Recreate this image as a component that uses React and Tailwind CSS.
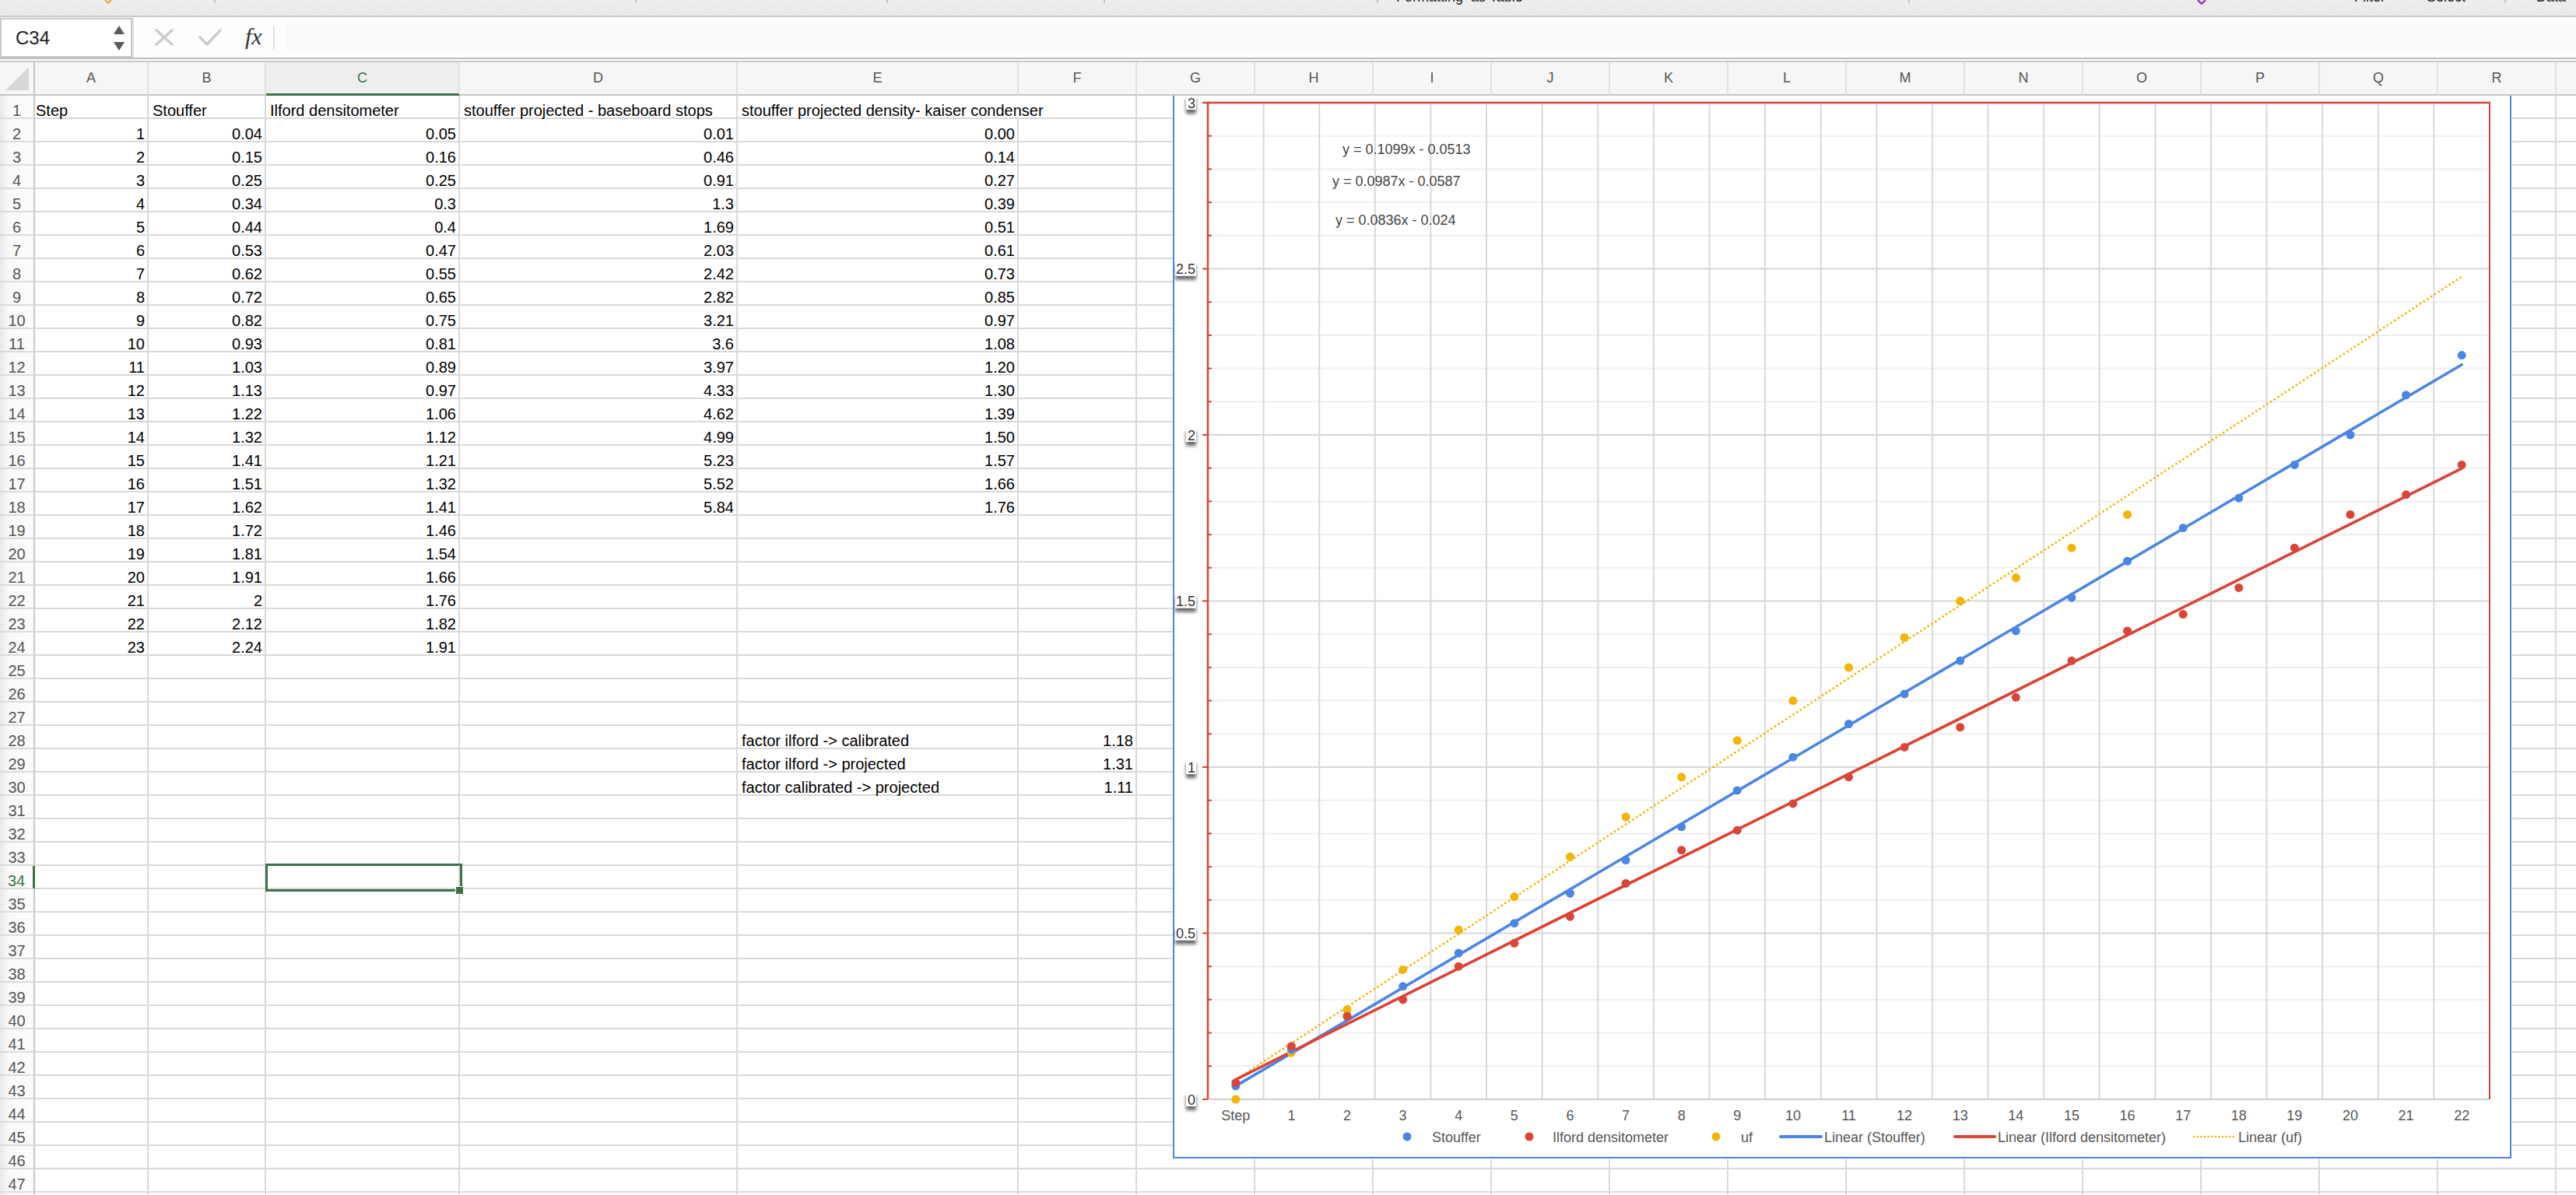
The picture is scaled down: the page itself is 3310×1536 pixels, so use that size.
import React from 'react';

const FONT = '"Liberation Sans", Arial, Helvetica, sans-serif';

const COLS = [
  ['A', 'w-[146px]'], ['B', 'w-[151px]'], ['C', 'w-[249px]'], ['D', 'w-[357px]'], ['E', 'w-[361px]'], ['F', 'w-[152px]'],
  ['G', 'w-[152px]'], ['H', 'w-[152px]'], ['I', 'w-[152px]'], ['J', 'w-[152px]'], ['K', 'w-[152px]'], ['L', 'w-[152px]'],
  ['M', 'w-[152px]'], ['N', 'w-[152px]'], ['O', 'w-[152px]'], ['P', 'w-[152px]'], ['Q', 'w-[152px]'], ['R', 'w-[152px]'], ['S', 'w-[152px]'],
];

const STOUFFER = ['0.04','0.15','0.25','0.34','0.44','0.53','0.62','0.72','0.82','0.93','1.03','1.13','1.22','1.32','1.41','1.51','1.62','1.72','1.81','1.91','2','2.12','2.24'];
const ILFORD = ['0.05','0.16','0.25','0.3','0.4','0.47','0.55','0.65','0.75','0.81','0.89','0.97','1.06','1.12','1.21','1.32','1.41','1.46','1.54','1.66','1.76','1.82','1.91'];
const PROJ = ['0.01','0.46','0.91','1.3','1.69','2.03','2.42','2.82','3.21','3.6','3.97','4.33','4.62','4.99','5.23','5.52','5.84'];
const UF = ['0.00','0.14','0.27','0.39','0.51','0.61','0.73','0.85','0.97','1.08','1.20','1.30','1.39','1.50','1.57','1.66','1.76'];

function cellValue(r, col) {
  if (r === 1) {
    const h = { A: 'Step', B: 'Stouffer', C: 'Ilford densitometer', D: 'stouffer projected - baseboard stops', E: 'stouffer projected density- kaiser condenser' };
    return h[col] ? { t: h[col], num: false } : null;
  }
  if (r >= 2 && r <= 24) {
    const i = r - 2;
    if (col === 'A') return { t: String(r - 1), num: true };
    if (col === 'B') return { t: STOUFFER[i], num: true };
    if (col === 'C') return { t: ILFORD[i], num: true };
    if (col === 'D' && PROJ[i]) return { t: PROJ[i], num: true };
    if (col === 'E' && UF[i]) return { t: UF[i], num: true };
  }
  const f = {
    28: ['factor ilford -> calibrated', '1.18'],
    29: ['factor ilford -> projected', '1.31'],
    30: ['factor calibrated -> projected', '1.11'],
  };
  if (f[r]) {
    if (col === 'E') return { t: f[r][0], num: false };
    if (col === 'F') return { t: f[r][1], num: true };
  }
  return null;
}

function Cell({ r, col, w }) {
  const v = cellValue(r, col);
  const noRight = r === 1 && col === 'E';
  const pad = col === 'A' ? 'pl-[1px]' : 'pl-[5px]';
  return (
    <div
      className={`${w} shrink-0 h-full flex items-end whitespace-nowrap text-[20px] leading-[18px] text-black border-b-2 border-[#d9d9d9] ${noRight ? 'border-r-0' : 'border-r-2'} ${v && v.num ? 'justify-end pr-[3px]' : pad}`}
    >
      {v ? v.t : ''}
    </div>
  );
}

function Row({ r }) {
  const sel = r === 34;
  return (
    <div className="flex h-[30px]">
      <div
        className={`w-[45px] shrink-0 h-full flex items-end justify-center text-[20px] leading-[18px] border-b-2 border-b-[#dcdcdc] bg-[linear-gradient(to_right,#e8e8e8,#f9f9f9_25%,#fcfcfc)] ${sel ? 'text-[#3c7149] border-r-[3px] border-r-[#3c7149]' : 'text-[#555] border-r-2 border-r-[#c8c8c8]'}`}
      >
        {r}
      </div>
      {COLS.map(([c, w]) => (
        <Cell key={c} r={r} col={c} w={w} />
      ))}
    </div>
  );
}

function Chart() {
  const L = 1552, R = 3199, T = 132, B = 1413;
  const CW = (R - L) / 23;
  const cx = (i) => L + CW * (i + 0.5);
  const yv = (v) => B - (v * (B - T)) / 3;
  const BLUE = '#4a86e8', RED = '#db4437', YEL = '#f4b400';
  const txt = { fontFamily: FONT, fontSize: 18 };

  const hGrid = [];
  for (let k = 1; k < 30; k++) {
    hGrid.push(<line key={'h' + k} x1={L} x2={R} y1={yv(k / 10)} y2={yv(k / 10)} stroke={k % 5 === 0 ? '#d6d6d6' : '#efefef'} strokeWidth="2" />);
  }
  const vGrid = [];
  for (let k = 1; k < 23; k++) {
    vGrid.push(<line key={'v' + k} x1={L + CW * k} x2={L + CW * k} y1={T} y2={B} stroke="#d9d9d9" strokeWidth="2" />);
  }
  const ticks = [];
  for (let k = 0; k <= 30; k++) {
    const y = yv(k / 10);
    if (k % 5 === 0) ticks.push(<line key={'t' + k} x1={1545} x2={L} y1={y} y2={y} stroke={RED} strokeWidth="2" />);
    else ticks.push(<line key={'t' + k} x1={L} x2={L + 5} y1={y} y2={y} stroke={RED} strokeWidth="2" />);
  }
  const yLabels = ['0', '0.5', '1', '1.5', '2', '2.5', '3'];
  const xLabels = ['Step'];
  for (let i = 1; i <= 22; i++) xLabels.push(String(i));

  const trend = (m, b) => `M${cx(0)} ${yv(m * 1 + b)} L${cx(22)} ${yv(m * 23 + b)}`;

  return (
    <svg className="absolute left-[1507px] top-0" width="1721" height="1367" viewBox="1507 123 1721 1367">
      <defs>
        <filter id="lblsh" x="-60%" y="-60%" width="220%" height="260%">
          <feDropShadow dx="0" dy="5" stdDeviation="2.2" floodColor="#000" floodOpacity="0.6" />
        </filter>
      </defs>
      <rect x="1507" y="100" width="1721" height="1390" fill="#ffffff" />

      {hGrid}
      {vGrid}
      <line x1={L} x2={R} y1={B} y2={B} stroke="#cfcfcf" strokeWidth="2" />

      <line x1="1546" x2={R + 1} y1={T} y2={T} stroke={RED} strokeWidth="2.5" />
      <line x1={L} x2={L} y1={T} y2={B} stroke={RED} strokeWidth="2.5" />
      <line x1={R} x2={R} y1={T} y2={B} stroke={RED} strokeWidth="2" />
      {ticks}

      {yLabels.map((t, i) => {
        const y = yv(i * 0.5);
        const w = t.length === 1 ? 13 : 27;
        return (
          <g key={'yl' + t}>
            <rect x={1537 - w} y={y - 10} width={w} height="19" fill="#fff" filter="url(#lblsh)" />
            <text x={1536} y={y + 6.5} textAnchor="end" style={txt} fill="#333">{t}</text>
          </g>
        );
      })}

      <path d="M1508 100 V1488 H3226 V100" fill="none" stroke={BLUE} strokeWidth="2" />

      {xLabels.map((t, i) => (
        <text key={'xl' + i} x={cx(i)} y={1439.5} textAnchor="middle" style={txt} fill="#555">{t}</text>
      ))}

      <text x="1725" y="198" style={txt} fill="#454545">y = 0.1099x - 0.0513</text>
      <text x="1712" y="239" style={txt} fill="#454545">y = 0.0987x - 0.0587</text>
      <text x="1716" y="289" style={txt} fill="#454545">y = 0.0836x - 0.024</text>

      <path d={trend(0.1099, -0.0513)} stroke={YEL} strokeWidth="2.8" strokeDasharray="0.1 5.5" strokeLinecap="round" fill="none" />
      <path d={trend(0.0987, -0.0587)} stroke={BLUE} strokeWidth="3.6" strokeLinecap="round" fill="none" />
      <path d={trend(0.0836, -0.024)} stroke={RED} strokeWidth="3.6" strokeLinecap="round" fill="none" />

      {UF.map((v, i) => <circle key={'u' + i} cx={cx(i)} cy={yv(parseFloat(v))} r="5.5" fill={YEL} />)}
      {STOUFFER.map((v, i) => <circle key={'s' + i} cx={cx(i)} cy={yv(parseFloat(v))} r="5.5" fill={BLUE} />)}
      {ILFORD.map((v, i) => <circle key={'i' + i} cx={cx(i)} cy={yv(parseFloat(v))} r="5.5" fill={RED} />)}

      <circle cx="1808" cy="1461" r="5.5" fill={BLUE} />
      <text x="1840" y="1467.5" style={txt} fill="#555">Stouffer</text>
      <circle cx="1965" cy="1461" r="5.5" fill={RED} />
      <text x="1995" y="1467.5" style={txt} fill="#555">Ilford densitometer</text>
      <circle cx="2205" cy="1461" r="5.5" fill={YEL} />
      <text x="2237" y="1467.5" style={txt} fill="#555">uf</text>
      <line x1="2288" x2="2340" y1="1461" y2="1461" stroke={BLUE} strokeWidth="4" strokeLinecap="round" />
      <text x="2344" y="1467.5" style={txt} fill="#555">Linear (Stouffer)</text>
      <line x1="2512" x2="2563" y1="1461" y2="1461" stroke={RED} strokeWidth="4" strokeLinecap="round" />
      <text x="2567" y="1467.5" style={txt} fill="#555">Linear (Ilford densitometer)</text>
      <line x1="2819" x2="2870" y1="1461" y2="1461" stroke={YEL} strokeWidth="2.5" strokeDasharray="0.1 4.5" strokeLinecap="round" />
      <text x="2876" y="1467.5" style={txt} fill="#555">Linear (uf)</text>
    </svg>
  );
}

function Sep() {
  return <div className="w-[2px] h-[4px] bg-[#c6c6c6] shrink-0" />;
}

function TopStrip() {
  const clip = 'shrink-0 text-[18px] leading-[18px] -mt-[13px] text-[#222] whitespace-nowrap';
  return (
    <div className="h-[22px] flex items-start bg-[linear-gradient(to_bottom,#eeeeee,#e9e9e9)] border-b-2 border-[#c9c9c9] overflow-hidden">
      <div className="w-[134px] shrink-0" />
      <svg width="10" height="5" className="shrink-0"><path d="M1 0 L5 4 L9 0" stroke="#f0a040" strokeWidth="2" fill="none" /></svg>
      <div className="w-[131px] shrink-0" />
      <Sep />
      <div className="w-[539px] shrink-0" />
      <Sep />
      <div className="w-[321px] shrink-0" />
      <Sep />
      <div className="w-[277px] shrink-0" />
      <Sep />
      <div className="w-[349px] shrink-0" />
      <Sep />
      <div className="w-[23px] shrink-0" />
      <div className={`w-[658px] ${clip}`}>Formatting&nbsp;&nbsp;as Table</div>
      <Sep />
      <div className="w-[369px] shrink-0" />
      <svg width="12" height="6" className="shrink-0"><path d="M1 0 L6 5 L11 0" stroke="#9b3fb5" strokeWidth="2.5" fill="none" /></svg>
      <div className="w-[190px] shrink-0" />
      <div className={`w-[93px] ${clip}`}>Filter</div>
      <div className={`w-[100px] ${clip}`}>Select</div>
      <Sep />
      <div className="w-[39px] shrink-0" />
      <div className={`w-[60px] ${clip}`}>Data</div>
    </div>
  );
}

function FormulaBar() {
  return (
    <div className="h-[52px] flex bg-[#fdfdfd]">
      <div className="w-[170px] shrink-0 h-[51px] mt-[1px] border-2 border-[#c8c8c8] bg-white flex items-center justify-between pl-[18px] pr-[8px]">
        <span className="text-[24px] leading-[24px] text-[#222]">C34</span>
        <div className="flex flex-col gap-[10px]">
          <svg width="14" height="11"><path d="M7 0 L14 11 L0 11 Z" fill="#5c5c5c" /></svg>
          <svg width="14" height="11"><path d="M0 0 L14 0 L7 11 Z" fill="#5c5c5c" /></svg>
        </div>
      </div>
      <div className="w-[2px] shrink-0 bg-[#e4e4e4]" />
      <div className="flex items-center pl-[27px]">
        <svg width="24" height="22" className="shrink-0">
          <path d="M2 2 L22 20 M22 2 L2 20" stroke="#cccccc" strokeWidth="3.5" strokeLinecap="round" />
        </svg>
        <div className="w-[32px] shrink-0" />
        <svg width="30" height="24" className="shrink-0">
          <path d="M2 12 L11 21 L28 3" stroke="#cccccc" strokeWidth="3.5" strokeLinecap="round" strokeLinejoin="round" fill="none" />
        </svg>
        <div className="w-[30px] shrink-0" />
        <span className="text-[30px] leading-[30px] italic text-[#333] pb-[2px]" style={{ fontFamily: '"Liberation Serif", "Times New Roman", serif' }}>fx</span>
        <div className="w-[14px] shrink-0" />
        <div className="w-[2px] h-[30px] bg-[#dedede] shrink-0" />
      </div>
      <div className="flex-1 ml-[14px] my-[8px] bg-[#f9f9f9]" />
    </div>
  );
}

function ColumnHeader() {
  return (
    <div className="h-[43px] flex bg-[#f6f6f6]">
      <div className="w-[45px] shrink-0 h-full border-r-2 border-r-[#c8c8c8] border-b-2 border-b-[#c6c6c6] flex items-center justify-center">
        <svg width="32" height="32"><path d="M31 1 L31 31 L1 31 Z" fill="#d7d7d7" /></svg>
      </div>
      {COLS.map(([c, w]) => {
        const sel = c === 'C';
        return (
          <div
            key={c}
            className={`${w} shrink-0 h-full flex items-center justify-center text-[18px] border-r-2 border-r-[#e1e1e1] ${sel ? 'text-[#3c7149] bg-[#eeeeee] border-b-[3px] border-b-[#3c7149]' : 'text-[#555] border-b-2 border-b-[#c6c6c6]'}`}
          >
            {c}
          </div>
        );
      })}
    </div>
  );
}

export default function App() {
  const rows = [];
  for (let r = 1; r <= 48; r++) rows.push(<Row key={r} r={r} />);
  return (
    <div className="w-[3310px] h-[1536px] overflow-hidden bg-white" style={{ fontFamily: FONT }}>
      <TopStrip />
      <FormulaBar />
      <div className="h-[6px] border-t-2 border-t-[#bdbdbd] border-b-2 border-b-[#c9c9c9] bg-white" />
      <ColumnHeader />
      <div className="relative h-[1413px] overflow-hidden">
        {rows}
        <div className="absolute left-[341px] top-[987px] w-[253px] h-[36px] border-[3px] border-[#3c7149]" />
        <div className="absolute left-[585px] top-[1016px] w-[11px] h-[11px] bg-[#3c7149] border border-white" />
        <Chart />
      </div>
    </div>
  );
}
